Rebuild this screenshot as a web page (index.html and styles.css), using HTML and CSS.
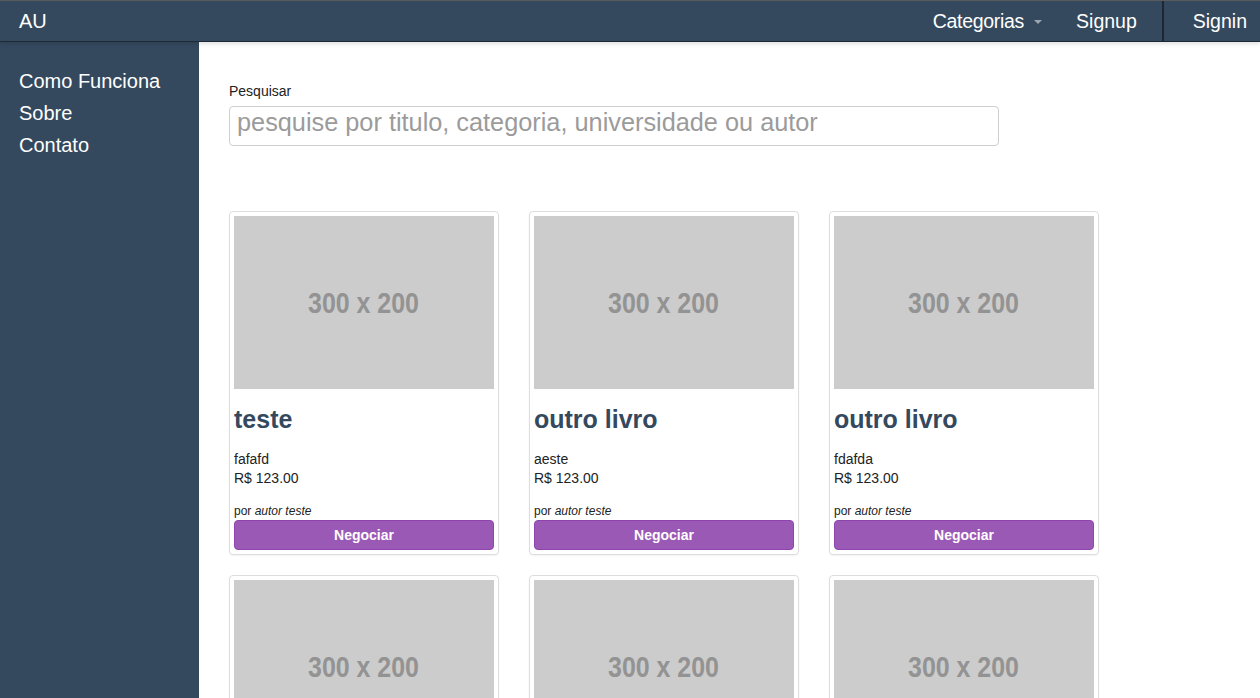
FILE: index.html
```html
<!DOCTYPE html>
<html lang="pt">
<head>
<meta charset="utf-8">
<title>AU</title>
<link rel="stylesheet" href="styles.css">
</head>
<body>
<header class="navbar">
  <a class="brand" href="#">AU</a>
  <nav class="nav-right">
    <a class="nav-link dropdown" href="#">Categorias<span class="caret"></span></a>
    <a class="nav-link signup" href="#">Signup</a>
    <span class="divider"></span>
    <a class="nav-link signin" href="#">Signin</a>
  </nav>
</header>
<div class="main">
  <aside class="sidebar">
    <a href="#">Como Funciona</a>
    <a href="#">Sobre</a>
    <a href="#">Contato</a>
  </aside>
  <section class="content">
    <label class="search-label" for="q">Pesquisar</label>
    <input class="search-input" id="q" type="text" placeholder="pesquise por titulo, categoria, universidade ou autor">
    <div class="grid">
      <div class="card">
        <div class="thumb"><span>300 x 200</span></div>
        <h3 class="title">teste</h3>
        <p class="desc">fafafd</p>
        <p class="price">R$ 123.00</p>
        <p class="author">por <em>autor teste</em></p>
        <button class="btn">Negociar</button>
      </div>
      <div class="card">
        <div class="thumb"><span>300 x 200</span></div>
        <h3 class="title">outro livro</h3>
        <p class="desc">aeste</p>
        <p class="price">R$ 123.00</p>
        <p class="author">por <em>autor teste</em></p>
        <button class="btn">Negociar</button>
      </div>
      <div class="card">
        <div class="thumb"><span>300 x 200</span></div>
        <h3 class="title">outro livro</h3>
        <p class="desc">fdafda</p>
        <p class="price">R$ 123.00</p>
        <p class="author">por <em>autor teste</em></p>
        <button class="btn">Negociar</button>
      </div>
      <div class="card">
        <div class="thumb"><span>300 x 200</span></div>
        <h3 class="title">outro livro</h3>
        <p class="desc">aeste</p>
        <p class="price">R$ 123.00</p>
        <p class="author">por <em>autor teste</em></p>
        <button class="btn">Negociar</button>
      </div>
      <div class="card">
        <div class="thumb"><span>300 x 200</span></div>
        <h3 class="title">outro livro</h3>
        <p class="desc">aeste</p>
        <p class="price">R$ 123.00</p>
        <p class="author">por <em>autor teste</em></p>
        <button class="btn">Negociar</button>
      </div>
      <div class="card">
        <div class="thumb"><span>300 x 200</span></div>
        <h3 class="title">outro livro</h3>
        <p class="desc">aeste</p>
        <p class="price">R$ 123.00</p>
        <p class="author">por <em>autor teste</em></p>
        <button class="btn">Negociar</button>
      </div>
    </div>
  </section>
</div>
</body>
</html>
```
FILE: styles.css
```css
* { box-sizing: border-box; }
html, body { margin: 0; padding: 0; }
body {
  font-family: "Liberation Sans", Arial, sans-serif;
  color: #222;
  background: #fff;
  height: 698px;
  overflow: hidden;
  display: flex;
  flex-direction: column;
}
a { text-decoration: none; }

.navbar {
  position: relative;
  z-index: 2;
  height: 42px;
  flex: 0 0 42px;
  background: #34495e;
  border-top: 1px solid #5b5b5b;
  border-bottom: 1px solid #1d2935;
  box-shadow: 0 2px 4px rgba(0,0,0,0.12);
  display: flex;
  align-items: center;
  justify-content: space-between;
}
.brand {
  color: #fff;
  font-size: 20px;
  padding-left: 19px;
}
.nav-right {
  display: flex;
  align-items: stretch;
  height: 100%;
}
.nav-link {
  color: #fff;
  font-size: 19.5px;
  display: flex;
  align-items: center;
}
.dropdown { padding-right: 34px; letter-spacing: -0.3px; }
.caret {
  display: inline-block;
  width: 0; height: 0;
  margin-left: 10px;
  margin-top: 2px;
  border-left: 4px solid transparent;
  border-right: 4px solid transparent;
  border-top: 4px solid #9aa5b0;
}
.signup { padding-right: 25px; }
.divider {
  width: 2px;
  background: #1c2733;
}
.signin { padding: 0 13px 0 29px; }

.main {
  flex: 1;
  display: flex;
  min-height: 0;
}
.sidebar {
  width: 199px;
  flex: 0 0 199px;
  background: #34495e;
  padding: 23px 0 0 19px;
  display: flex;
  flex-direction: column;
}
.sidebar a {
  color: #fff;
  font-size: 20px;
  line-height: 32px;
}

.content {
  padding: 41px 0 0 30px;
  display: flex;
  flex-direction: column;
  align-items: flex-start;
}
.content > * { flex-shrink: 0; }
.search-label {
  font-size: 14px;
  line-height: 16px;
  color: #222;
  margin-bottom: 7px;
}
.search-input {
  width: 770px;
  height: 40px;
  border: 1px solid #cfcfcf;
  border-radius: 4px;
  padding: 0 0 8px 7px;
  font-family: "Liberation Sans", Arial, sans-serif;
  font-size: 25.3px;
  color: #333;
  outline: none;
}
.search-input::placeholder { color: #9b9b9b; }

.grid {
  margin-top: 65px;
  display: grid;
  grid-template-columns: repeat(3, 270px);
  column-gap: 30px;
  row-gap: 20px;
}
.card {
  border: 1px solid #ddd;
  border-radius: 4px;
  padding: 4px;
  box-shadow: 0 1px 2px rgba(0,0,0,0.05);
}
.thumb {
  height: 173px;
  background: #cccccc;
  color: #939393;
  font-family: "Liberation Sans", Arial, sans-serif;
  font-weight: bold;
  font-size: 29px;
  display: flex;
  align-items: center;
  justify-content: center;
}
.thumb span {
  display: inline-block;
  transform: scaleX(0.86);
  margin-top: 2px;
}
.title {
  margin: 16px 0 0;
  font-size: 25px;
  line-height: 28px;
  font-weight: bold;
  color: #34495e;
}
.desc, .price {
  margin: 0;
  font-size: 14px;
  line-height: 19px;
}
.desc { margin-top: 17px; }
.author {
  margin: 16px 0 0;
  font-size: 12px;
  line-height: 14px;
}
.author em { font-style: italic; }
.btn {
  display: block;
  width: 100%;
  height: 30px;
  margin-top: 2px;
  background: #9b59b6;
  border: 1px solid #8e44ad;
  border-radius: 4px;
  color: #fff;
  font-family: "Liberation Sans", Arial, sans-serif;
  font-weight: bold;
  font-size: 14px;
  padding: 0;
}
```
